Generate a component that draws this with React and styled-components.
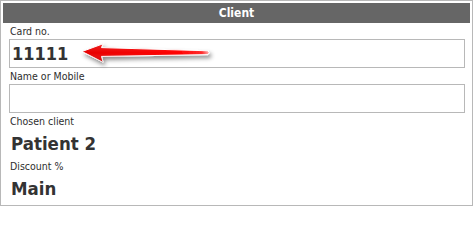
import React from "react";
import styled, { createGlobalStyle } from "styled-components";

const Global = createGlobalStyle`
  html, body { margin: 0; padding: 0; background: #ffffff; }
  * { box-sizing: border-box; }
`;

const FONT = `"DejaVu Sans Condensed", "DejaVu Sans", sans-serif`;

const Panel = styled.div`
  width: 473px;
  height: 206px;
  border: 1px solid #b8b8b8;
  padding: 2px;
  background: #fff;
  font-family: ${FONT};
  font-stretch: condensed;
  color: #333;
  display: flex;
  flex-direction: column;
`;

const Header = styled.div`
  height: 20px;
  background: #666666;
  color: #fff;
  font-weight: bold;
  font-size: 12px;
  line-height: 20px;
  text-align: center;
`;

const Body = styled.div`
  display: flex;
  flex-direction: column;
  padding: 0 5px 0 6px;
`;

const Label = styled.div`
  font-size: 10.5px;
  line-height: 16px;
  height: 16px;
  padding-left: 1px;
  color: #2e2e2e;
`;

const Value = styled.div`
  font-size: 18.5px;
  font-weight: bold;
  line-height: 29px;
  height: 29px;
  padding-left: 2px;
  color: #333;
`;

const Field = styled.div`
  position: relative;
  height: 29px;
`;

const TextInput = styled.input`
  display: block;
  width: 100%;
  height: 29px;
  margin: 0;
  border: 1px solid #b8b8b8;
  padding: 0 0 0 2px;
  outline: none;
  background: #fff;
  font-family: ${FONT};
  font-stretch: condensed;
  font-size: 18px;
  font-weight: bold;
  line-height: 27px;
  color: #333;
`;

const Pointer = styled.svg`
  position: absolute;
  left: 0;
  top: 0;
  width: 220px;
  height: 32px;
  overflow: visible;
  pointer-events: none;
`;

const Arrow = () => (
  <Pointer viewBox="0 0 220 32">
    <defs>
      <linearGradient id="arrFill" x1="73" y1="0" x2="202" y2="0" gradientUnits="userSpaceOnUse">
        <stop offset="0" stopColor="#e60000" />
        <stop offset="0.75" stopColor="#ff0000" />
        <stop offset="0.93" stopColor="#ff2a2a" />
        <stop offset="1" stopColor="#ffd6d6" />
      </linearGradient>
      <linearGradient id="arrShade" x1="0" y1="5" x2="0" y2="23" gradientUnits="userSpaceOnUse">
        <stop offset="0" stopColor="#ffffff" stopOpacity="0.15" />
        <stop offset="0.5" stopColor="#ffffff" stopOpacity="0" />
        <stop offset="1" stopColor="#800000" stopOpacity="0.25" />
      </linearGradient>
      <filter id="arrShadow" x="-10%" y="-50%" width="130%" height="220%">
        <feDropShadow dx="2" dy="3" stdDeviation="2" floodColor="#000" floodOpacity="0.45" />
      </filter>
    </defs>
    <g filter="url(#arrShadow)">
      <path
        d="M73 12.5 L94 4.8 L92.5 8.6 L199 11.8 Q201.5 13.7 199 15.6 L92.5 17.4 L94 23.2 Z"
        fill="url(#arrFill)"
        stroke="#ffffff"
        strokeWidth="1"
        strokeLinejoin="round"
      />
    </g>
    <path
      d="M73 12.5 L94 4.8 L92.5 8.6 L199 11.8 Q201.5 13.7 199 15.6 L92.5 17.4 L94 23.2 Z"
      fill="url(#arrShade)"
    />
  </Pointer>
);

export default function App() {
  return (
    <>
      <Global />
      <Panel>
        <Header>Client</Header>
        <Body>
          <Label>Card no.</Label>
          <Field>
            <TextInput readOnly defaultValue="11111" />
            <Arrow />
          </Field>
          <Label>Name or Mobile</Label>
          <Field>
            <TextInput readOnly defaultValue="" />
          </Field>
          <Label>Chosen client</Label>
          <Value>Patient 2</Value>
          <Label>Discount %</Label>
          <Value>Main</Value>
        </Body>
      </Panel>
    </>
  );
}
